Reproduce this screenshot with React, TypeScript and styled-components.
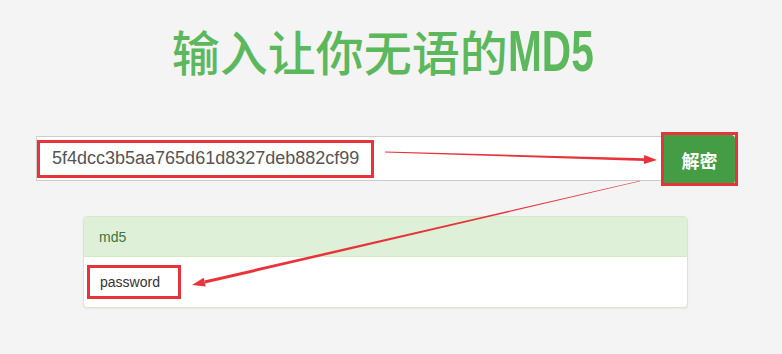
import React from 'react';
import styled, { createGlobalStyle } from 'styled-components';

const GlobalStyle = createGlobalStyle`
  html, body { margin: 0; padding: 0; background: #f4f4f4; }
  body { font-family: "Liberation Sans", Arial, "Noto Sans CJK SC", sans-serif; }
`;

const Page = styled.div`
  position: relative;
  width: 782px; height: 354px;
  overflow: hidden;
  display: flex; flex-direction: column;
  padding-left: 36px;
  box-sizing: border-box;
`;

const Title = styled.h1`
  width: 694px;
  margin: 20px 0 0;
  height: 60px; line-height: 60px;
  text-align: center;
  font-family: "Noto Sans CJK SC", sans-serif;
  font-size: 48px; font-weight: 500;
  color: #5cb85c;
  white-space: nowrap;
`;

// the tall, narrow latin glyphs of the heading font
const Latin = styled.span`
  display: inline-block;
  font-family: "Liberation Sans", sans-serif;
  font-size: 58px; font-weight: 700;
  line-height: 1;
  transform: scaleX(0.7);
  transform-origin: left center;
  margin-right: -36px;
`;

const SearchBar = styled.div`
  display: flex; align-items: flex-start;
  margin-top: 55px;
`;

const HashInput = styled.div`
  width: 628px; height: 45px;
  margin-top: 1px;
  box-sizing: border-box;
  border: 1px solid #ccc;
  border-right: none;
  background: #fff;
  padding-left: 15px;
  display: flex; align-items: center;
  font-size: 18px; color: #555;
`;

const DecryptButton = styled.button`
  width: 71px; height: 49px;
  border: none; border-radius: 0 4px 4px 0;
  background: #449d44;
  color: #fff;
  font-family: "Noto Sans CJK SC", sans-serif;
  font-size: 18px; font-weight: 700;
  padding: 0;
`;

const Panel = styled.div`
  margin: 32px 0 0 47px;
  width: 603px;
  border: 1px solid #d6e9c6;
  border-radius: 4px;
  background: #fff;
  box-shadow: 0 1px 2px rgba(0,0,0,0.06);
  overflow: hidden;
`;

const PanelHeading = styled.div`
  height: 40px;
  box-sizing: border-box;
  padding-left: 15px;
  display: flex; align-items: center;
  background: #dff0d8;
  border-bottom: 1px solid #d6e9c6;
  color: #3c763d;
  font-size: 14px;
`;

const PanelBody = styled.div`
  height: 50px;
  padding-left: 16px;
  display: flex; align-items: center;
  font-size: 14px; color: #333;
`;

const Overlay = styled.svg`
  position: absolute; left: 0; top: 0;
  width: 782px; height: 354px;
  pointer-events: none;
`;

const RED = '#e8333b';

type Pt = [number, number];

// tapered stroke with an arrowhead at the end
function arrow(from: Pt, to: Pt, w0: number, w1: number, headLen: number, headHalf: number) {
  const dx = to[0] - from[0];
  const dy = to[1] - from[1];
  const len = Math.hypot(dx, dy);
  const ux = dx / len, uy = dy / len;
  const nx = -uy, ny = ux;
  const bx = to[0] - ux * headLen, by = to[1] - uy * headLen;
  const shaft = [
    [from[0] + nx * w0, from[1] + ny * w0],
    [bx + nx * w1, by + ny * w1],
    [bx - nx * w1, by - ny * w1],
    [from[0] - nx * w0, from[1] - ny * w0],
  ];
  const head = [
    [to[0], to[1]],
    [bx + nx * headHalf, by + ny * headHalf],
    [bx - nx * headHalf, by - ny * headHalf],
  ];
  const s = (p: number[][]) => p.map(q => q.join(',')).join(' ');
  return { shaft: s(shaft), head: s(head) };
}

function Arrow({ from, to, w0, w1 }: { from: Pt; to: Pt; w0: number; w1: number }) {
  const a = arrow(from, to, w0, w1, 13, 4.5);
  return (
    <g fill={RED}>
      <polygon points={a.shaft} />
      <polygon points={a.head} />
    </g>
  );
}

function App() {
  return (
    <>
      <GlobalStyle />
      <Page>
        <Title>输入让你无语的<Latin>MD5</Latin></Title>
        <SearchBar>
          <HashInput>5f4dcc3b5aa765d61d8327deb882cf99</HashInput>
          <DecryptButton>解密</DecryptButton>
        </SearchBar>
        <Panel>
          <PanelHeading>md5</PanelHeading>
          <PanelBody>password</PanelBody>
        </Panel>
        <Overlay viewBox="0 0 782 354">
          <g fill="none" stroke={RED} strokeWidth={3}>
            <rect x={38.5} y={141.5} width={334} height={35} />
            <rect x={662.5} y={133.5} width={74} height={51} />
            <rect x={88.5} y={266.5} width={91} height={31} />
          </g>
          <Arrow from={[385, 152]} to={[657, 160]} w0={0.5} w1={1.4} />
          <Arrow from={[640, 181]} to={[192, 285]} w0={0.3} w1={1.6} />
        </Overlay>
      </Page>
    </>
  );
}

export default App;
